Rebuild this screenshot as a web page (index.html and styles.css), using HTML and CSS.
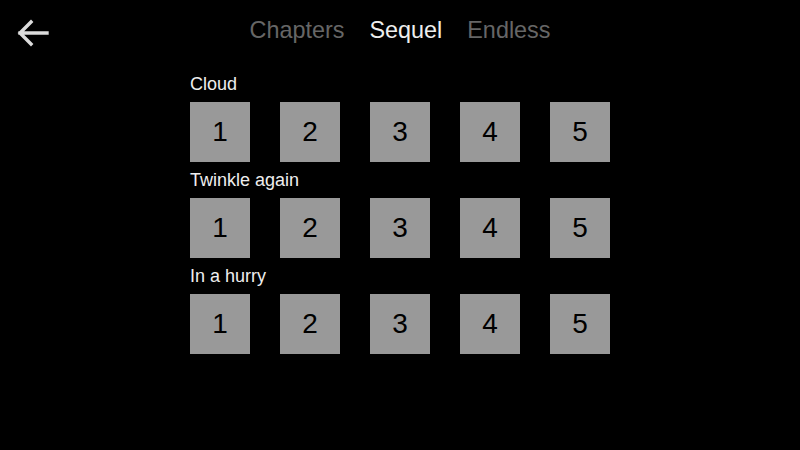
FILE: index.html
```html
<!DOCTYPE html>
<html lang="en">
<head>
  <meta charset="UTF-8" />
  <title>Levels</title>
  <link rel="stylesheet" href="styles.css">
</head>
<body>
  <div class="header">
    <button class="back" aria-label="Back">
      <svg width="34" height="30" viewBox="0 0 34 30">
        <path d="M31 14 H4 M15 3 L4 14 L15 25" fill="none" stroke="#dcdcdc" stroke-width="3.4" stroke-linecap="square"/>
      </svg>
    </button>
    <div class="tabs">
      <span class="tab">Chapters</span>
      <span class="tab active">Sequel</span>
      <span class="tab">Endless</span>
    </div>
  </div>

  <div class="levels">
    <div class="group">
      <div class="label">Cloud</div>
      <div class="tiles">
        <button>1</button><button>2</button><button>3</button><button>4</button><button>5</button>
      </div>
    </div>
    <div class="group">
      <div class="label">Twinkle again</div>
      <div class="tiles">
        <button>1</button><button>2</button><button>3</button><button>4</button><button>5</button>
      </div>
    </div>
    <div class="group">
      <div class="label">In a hurry</div>
      <div class="tiles">
        <button>1</button><button>2</button><button>3</button><button>4</button><button>5</button>
      </div>
    </div>
  </div>
</body>
</html>
```

FILE: styles.css
```css
body {
  margin: 0;
  width: 800px;
  height: 450px;
  background: #000;
  font-family: "Liberation Sans", Arial, sans-serif;
  overflow: hidden;
}
.header {
  position: relative;
  height: 66px;
}
.back {
  position: absolute;
  left: 16px;
  top: 19px;
  padding: 0;
  border: none;
  background: none;
  cursor: pointer;
}
.back svg {
  display: block;
}
.tabs {
  display: flex;
  justify-content: center;
  gap: 25px;
  padding-top: 14px;
  font-size: 23.4px;
  line-height: 32px;
}
.tab {
  color: #666;
}
.tab.active {
  color: #eee;
}
.levels {
  width: 420px;
  margin: 0 auto;
  display: flex;
  flex-direction: column;
}
.label {
  color: #eee;
  font-size: 18px;
  line-height: 20px;
  padding: 8px 0 8px;
}
.tiles {
  display: flex;
  gap: 30px;
}
.tiles button {
  width: 60px;
  height: 60px;
  padding: 0;
  border: none;
  background: #999;
  color: #000;
  font-family: "Liberation Sans", Arial, sans-serif;
  font-size: 28px;
  cursor: pointer;
}
```
